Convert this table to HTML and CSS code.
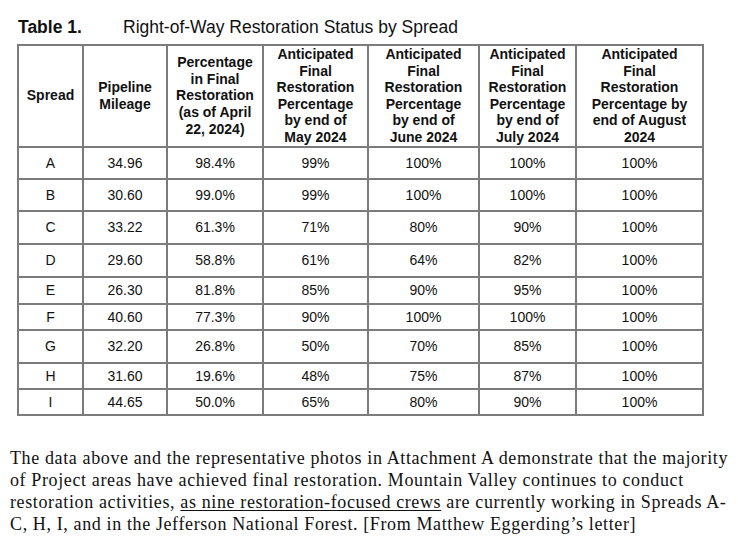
FILE: index.html
```html
<!DOCTYPE html>
<html>
<head>
<meta charset="utf-8">
<link rel="stylesheet" href="styles.css">
</head>
<body>
<div class="page">
  <div class="title"><span class="label">Table 1.</span><span class="caption">Right-of-Way Restoration Status by Spread</span></div>
  <table class="status">
    <colgroup>
      <col class="c1"><col class="c2"><col class="c3"><col class="c4"><col class="c5"><col class="c6"><col class="c7">
    </colgroup>
    <thead>
      <tr>
        <th>Spread</th>
        <th>Pipeline<br>Mileage</th>
        <th>Percentage<br>in Final<br>Restoration<br>(as of April<br>22, 2024)</th>
        <th>Anticipated<br>Final<br>Restoration<br>Percentage<br>by end of<br>May 2024</th>
        <th>Anticipated<br>Final<br>Restoration<br>Percentage<br>by end of<br>June 2024</th>
        <th>Anticipated<br>Final<br>Restoration<br>Percentage<br>by end of<br>July 2024</th>
        <th>Anticipated<br>Final<br>Restoration<br>Percentage by<br>end of August<br>2024</th>
      </tr>
    </thead>
    <tbody>
      <tr class="r32"><td>A</td><td>34.96</td><td>98.4%</td><td>99%</td><td>100%</td><td>100%</td><td>100%</td></tr>
      <tr class="r32"><td>B</td><td>30.60</td><td>99.0%</td><td>99%</td><td>100%</td><td>100%</td><td>100%</td></tr>
      <tr class="r33"><td>C</td><td>33.22</td><td>61.3%</td><td>71%</td><td>80%</td><td>90%</td><td>100%</td></tr>
      <tr class="r33"><td>D</td><td>29.60</td><td>58.8%</td><td>61%</td><td>64%</td><td>82%</td><td>100%</td></tr>
      <tr class="r27"><td>E</td><td>26.30</td><td>81.8%</td><td>85%</td><td>90%</td><td>95%</td><td>100%</td></tr>
      <tr class="r26"><td>F</td><td>40.60</td><td>77.3%</td><td>90%</td><td>100%</td><td>100%</td><td>100%</td></tr>
      <tr class="r33"><td>G</td><td>32.20</td><td>26.8%</td><td>50%</td><td>70%</td><td>85%</td><td>100%</td></tr>
      <tr class="r26"><td>H</td><td>31.60</td><td>19.6%</td><td>48%</td><td>75%</td><td>87%</td><td>100%</td></tr>
      <tr class="r26"><td>I</td><td>44.65</td><td>50.0%</td><td>65%</td><td>80%</td><td>90%</td><td>100%</td></tr>
    </tbody>
  </table>
  <p class="note">The data above and the representative photos in Attachment A demonstrate that the majority<br>of Project areas have achieved final restoration. Mountain Valley continues to conduct<br>restoration activities, <u>as nine restoration-focused crews</u> are currently working in Spreads A-<br>C, H, I, and in the Jefferson National Forest. [From Matthew Eggerding’s letter]</p>
</div>
</body>
</html>
```

FILE: styles.css
```css
html, body {
  margin: 0;
  padding: 0;
  background: #ffffff;
}

.page {
  width: 738px;
  height: 558px;
  padding: 17px 0 0 0;
  box-sizing: border-box;
  color: #111;
  overflow: hidden;
}

.title {
  display: flex;
  font-family: "Liberation Sans", Arial, sans-serif;
  font-size: 17.5px;
  line-height: 20px;
  padding-left: 18px;
  margin-bottom: 7px;
}

.title .label {
  font-weight: bold;
  width: 105px;
}

.status {
  margin-left: 17px;
  border-collapse: collapse;
  table-layout: fixed;
  width: 685px;
  font-family: "Liberation Sans", Arial, sans-serif;
  font-size: 14px;
}

.c1 { width: 65px; }
.c2 { width: 84px; }
.c3 { width: 96px; }
.c4 { width: 105px; }
.c5 { width: 111px; }
.c6 { width: 97px; }
.c7 { width: 127px; }

.status th,
.status td {
  border: 2px solid #7c7c7c;
  text-align: center;
  vertical-align: middle;
  padding: 0;
}

.status th {
  font-weight: bold;
  line-height: 16.6px;
  height: 99px;
}

.status td {
  line-height: 16px;
}

.r32 td { height: 30px; }
.r33 td { height: 31px; }
.r27 td { height: 25px; }
.r26 td { height: 24px; }

.note {
  margin: 31px 0 0 10px;
  width: 728px;
  white-space: nowrap;
  font-family: "Liberation Serif", "Times New Roman", serif;
  font-size: 18px;
  letter-spacing: 0.62px;
  line-height: 22px;
}

.note u {
  text-decoration-thickness: 1px;
  text-underline-offset: 2px;
}
```
